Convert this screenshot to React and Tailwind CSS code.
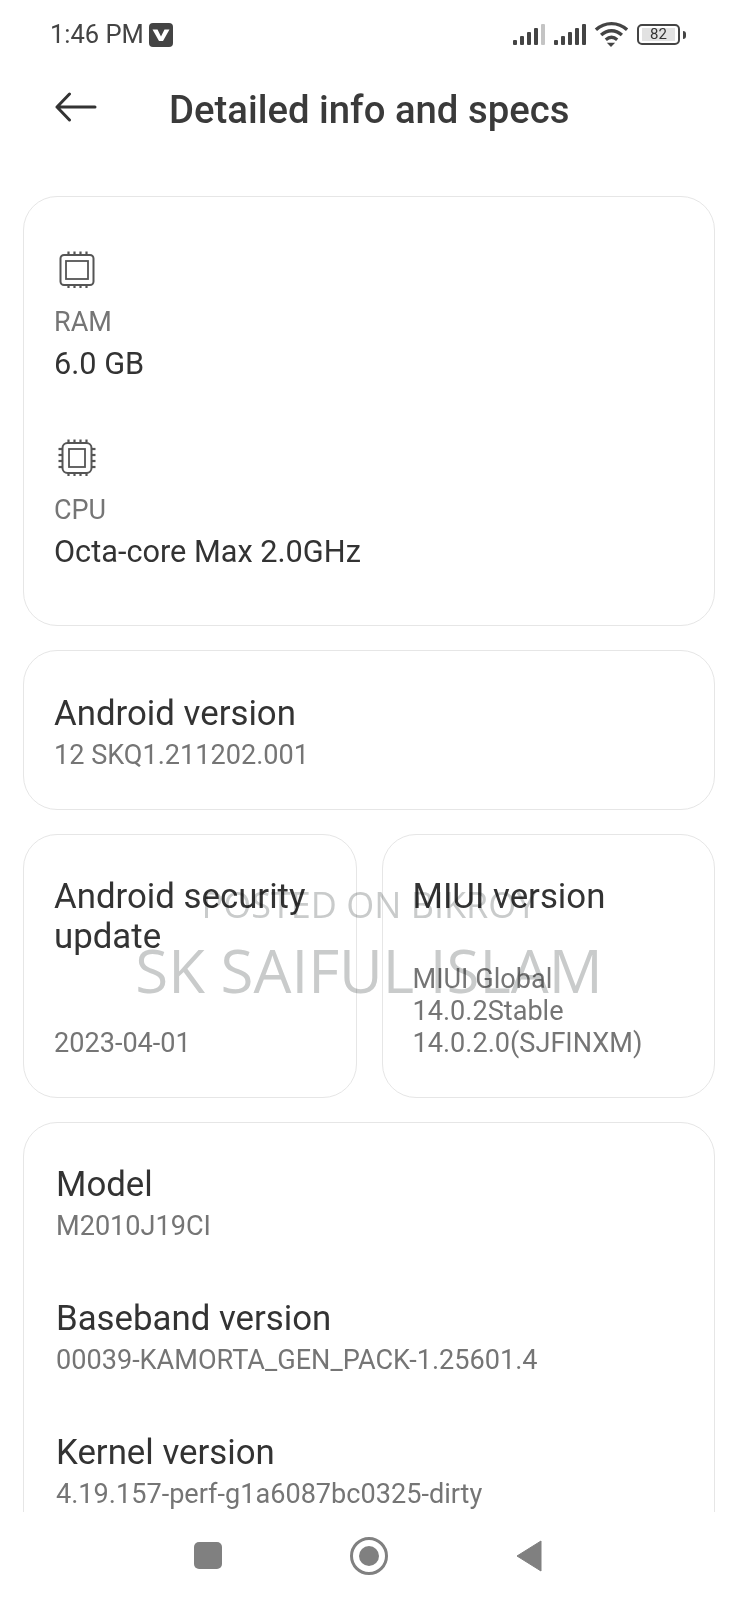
const font = { fontFamily: "Roboto, sans-serif" };

function ChipIcon({ side }) {
  const pins = [10, 16, 22, 28];
  return (
    <svg width="38" height="38" viewBox="0 0 38 38" fill="none" stroke="#555" className="block">
      {side ? (
        <rect x="4.5" y="4" width="29" height="30" rx="5" strokeWidth="2" />
      ) : (
        <rect x="2.5" y="4" width="33" height="30" rx="3.5" strokeWidth="2" />
      )}
      <rect x={side ? 11 : 8} y="10" width={side ? 16 : 22} height="18" strokeWidth="1.8" />
      {pins.map((p) => (
        <g key={p} strokeWidth="2.2">
          <path d={`M${p + 0.5} 0.5v3`} />
          <path d={`M${p + 0.5} 34v3`} />
          {side && <path d={`M0.5 ${p}h4`} />}
          {side && <path d={`M33.5 ${p}h4`} />}
        </g>
      ))}
    </svg>
  );
}

function Signal({ faded }) {
  const bars = [5, 9, 13, 17, 21];
  return (
    <svg width="33" height="22" viewBox="0 0 33 22" fill="#444">
      {bars.map((h, i) => (
        <rect key={i} x={i * 7} y={21 - h} width="4" height={h} rx="1" fill={faded && i === 4 ? "#c4c4c4" : "#444"} />
      ))}
    </svg>
  );
}

function StatusBar() {
  return (
    <div className="flex h-[68px] items-center justify-between pl-[50px] pr-[52px] pt-[1px] text-[#444]">
      <div className="flex items-center gap-[5px]">
        <span className="text-[25.5px] leading-none">1:46 PM</span>
        <svg width="24" height="24" viewBox="0 0 24 24">
          <rect width="24" height="24" rx="4" fill="#444" />
          <path d="M3.5 6.5h5l3.5 7 3.5-7h5L14 18h-4z" fill="#fff" />
        </svg>
      </div>
      <div className="flex items-center">
        <Signal faded />
        <div className="w-[8px]" />
        <Signal />
        <svg width="35" height="27" viewBox="0 0 33 26" fill="none" stroke="#444" strokeWidth="3.2" className="ml-[7px]">
          <path d="M1.5 8.5C10 0.5 23 0.5 31.5 8.5" />
          <path d="M6.5 13.5C12.5 8 20.5 8 26.5 13.5" />
          <path d="M11 18C14.5 15 18.5 15 22 18" />
          <path d="M12 21h8l-4 4z" fill="#444" stroke="none" />
        </svg>
        <div className="ml-[8px] flex h-[21px] w-[43px] items-center justify-center rounded-[5px] border-2 border-[#444] px-[3px]">
          <span className="flex h-[13px] w-full items-center justify-center bg-[#e2e2e2] text-[15px] leading-none text-[#333]">82</span>
        </div>
        <div className="ml-[3px] h-[8px] w-[3px] rounded-r-sm bg-[#444]" />
      </div>
    </div>
  );
}

function Card({ className = "", children }) {
  return <div className={`rounded-[34px] border border-[#e6e6e6] bg-white ${className}`}>{children}</div>;
}

function Spec({ icon, label, value }) {
  return (
    <div>
      <div className="mb-[18px] ml-[4px]">{icon}</div>
      <div className="text-[27px] leading-[30px] text-[#757575]">{label}</div>
      <div className="mt-[11px] text-[30.7px] leading-[32px] text-[#333]">{value}</div>
    </div>
  );
}

function Info({ title, value }) {
  return (
    <div>
      <div className="text-[34.8px] leading-[40px] text-[#333]">{title}</div>
      <div className="mt-[6px] text-[27.1px] leading-[32px] text-[#757575]">{value}</div>
    </div>
  );
}

export default function App() {
  return (
    <div className="relative flex h-[1600px] w-[738px] flex-col overflow-hidden bg-white" style={font}>
      <StatusBar />

      {/* header */}
      <div className="flex h-[87px] items-center">
        <svg width="42" height="30" viewBox="0 0 42 30" fill="none" stroke="#333" strokeWidth="3" strokeLinecap="round" strokeLinejoin="round" className="mb-[9px] ml-[55px]">
          <path d="M40 15H2M14.5 2L2 15l12.5 13" />
        </svg>
        <h1 className="mb-[2px] ml-[72px] text-[38.3px] leading-none font-medium text-[#3a3a3a]">Detailed info and specs</h1>
      </div>

      <div className="flex min-h-0 flex-1 flex-col gap-[24px] overflow-hidden px-[23px] pt-[41px]">
        <Card className="h-[430px] shrink-0 pl-[30px] pt-[54px]">
          <div className="flex flex-col gap-[59px]">
            <Spec icon={<ChipIcon />} label="RAM" value="6.0 GB" />
            <Spec icon={<ChipIcon side />} label="CPU" value="Octa-core Max 2.0GHz" />
          </div>
        </Card>

        <Card className="h-[160px] shrink-0 pl-[30px] pt-[42px]">
          <Info title="Android version" value="12 SKQ1.211202.001" />
        </Card>

        <div className="flex shrink-0 gap-[25px]">
          <Card className="flex h-[264px] flex-1 flex-col justify-between pb-[38px] pl-[30px] pt-[41px]">
            <div className="text-[34.8px] leading-[40px] text-[#333]">Android security<br />update</div>
            <div className="text-[27.1px] leading-[32px] text-[#757575]">2023-04-01</div>
          </Card>
          <Card className="flex h-[264px] flex-1 flex-col justify-between pb-[38px] pl-[30px] pt-[41px]">
            <div className="text-[34.8px] leading-[40px] text-[#333]">MIUI version</div>
            <div className="text-[27.1px] leading-[32px] text-[#757575]">MIUI Global<br />14.0.2Stable<br />14.0.2.0(SJFINXM)</div>
          </Card>
        </div>

        <Card className="shrink-0 pb-[40px] pl-[32px] pt-[41px]">
          <div className="flex flex-col gap-[56px]">
            <Info title="Model" value="M2010J19CI" />
            <Info title="Baseband version" value="00039-KAMORTA_GEN_PACK-1.25601.4" />
            <Info title="Kernel version" value="4.19.157-perf-g1a6087bc0325-dirty" />
          </div>
        </Card>
      </div>

      {/* nav bar */}
      <div className="flex h-[88px] shrink-0 items-center justify-center bg-white pb-[1px] pr-[3px]">
        <div className="h-[27px] w-[28px] rounded-[5px] bg-[#808080]" />
        <div className="ml-[128px] flex h-[38px] w-[38px] items-center justify-center rounded-full border-[3px] border-[#808080]">
          <div className="h-[20px] w-[20px] rounded-full bg-[#808080]" />
        </div>
        <svg width="26" height="32" viewBox="0 0 26 32" className="ml-[128px]">
          <path d="M25 1v30L1 16z" fill="#808080" stroke="#808080" strokeLinejoin="round" />
        </svg>
      </div>

      {/* watermark */}
      <div className="pointer-events-none absolute left-0 right-0 top-[882px] flex flex-col items-center text-[#c9cbcb] mix-blend-multiply" style={{ fontFamily: "'Open Sans', sans-serif" }}>
        <div className="text-[36px] leading-[46px]">POSTED ON BIKROY</div>
        <div className="mt-[8px] text-[60px] leading-[68px]">SK SAIFUL ISLAM</div>
      </div>
    </div>
  );
}
